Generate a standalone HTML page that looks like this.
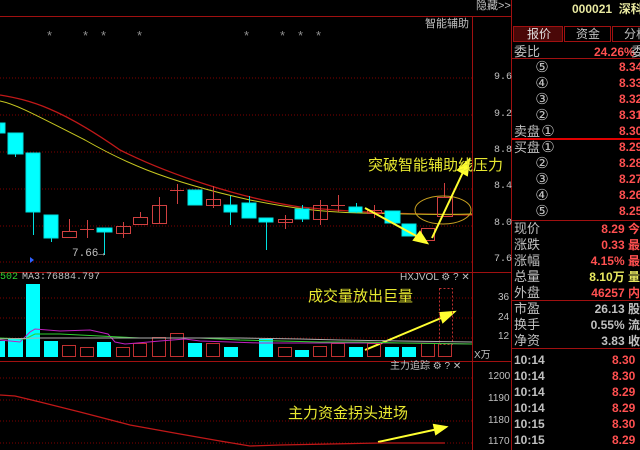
<!DOCTYPE html>
<html><head><meta charset="utf-8"><style>
*{margin:0;padding:0}
body{width:640px;height:450px;background:#000;overflow:hidden;position:relative;font-family:"Liberation Sans","Noto Sans CJK SC",sans-serif}
.t{position:absolute;white-space:nowrap;line-height:1}
.g{color:#c0c0c0}
.r{color:#ff5050}
.c{font-family:"DejaVu Sans",sans-serif;font-size:15px;display:inline-block;width:16px;text-align:center}
.ob div{height:16px}
</style></head><body>
<svg width="640" height="450" style="position:absolute;left:0;top:0" xmlns="http://www.w3.org/2000/svg">
<g stroke="#800000" stroke-width="1" stroke-dasharray="1,2">
<line x1="0" y1="78" x2="472" y2="78"/><line x1="0" y1="115" x2="472" y2="115"/><line x1="0" y1="152" x2="472" y2="152"/>
<line x1="0" y1="189" x2="472" y2="189"/><line x1="0" y1="226" x2="472" y2="226"/><line x1="0" y1="262" x2="472" y2="262"/>
<line x1="0" y1="298" x2="472" y2="298"/><line x1="0" y1="318" x2="472" y2="318"/><line x1="0" y1="338" x2="472" y2="338"/>
<line x1="0" y1="378" x2="472" y2="378"/><line x1="0" y1="400" x2="472" y2="400"/><line x1="0" y1="421" x2="472" y2="421"/><line x1="0" y1="443" x2="472" y2="443"/>
</g>
<g stroke="#a01010" stroke-width="1">
<line x1="0" y1="16.5" x2="511" y2="16.5"/>
<line x1="472.5" y1="16" x2="472.5" y2="450"/>
<line x1="0" y1="272.5" x2="511" y2="272.5"/>
<line x1="0" y1="361.5" x2="511" y2="361.5"/>
<line x1="511.5" y1="0" x2="511.5" y2="450"/>
<line x1="512" y1="58.5" x2="640" y2="58.5"/>
<line x1="512" y1="220.5" x2="640" y2="220.5"/>
<line x1="512" y1="300.5" x2="640" y2="300.5"/>
<line x1="512" y1="348.5" x2="640" y2="348.5"/>
</g>
<line x1="512" y1="139" x2="640" y2="139" stroke="#e00000" stroke-width="2"/>
<rect x="513.5" y="26.5" width="49" height="15" fill="#4a0808" stroke="#a01010"/>
<rect x="564.5" y="26.5" width="46" height="15" fill="#000" stroke="#a01010"/>
<rect x="612.5" y="26.5" width="40" height="15" fill="#000" stroke="#a01010"/>
<path d="M0,95 C30,100 60,108 120,150 C170,175 240,198 300,207 C350,212 400,214 472,215" fill="none" stroke="#c01818" stroke-width="1.3"/>
<path d="M0,101 C15,104 30,112 85,140 C120,160 160,180 250,200 C290,208 320,212 360,213 C400,214 440,215 472,214" fill="none" stroke="#c8c820" stroke-width="1"/>
<g stroke="#00e0e0" fill="#00ffff">
<rect x="0" y="123" width="5" height="10"/>
<line x1="15.5" y1="133" x2="15.5" y2="157"/><rect x="8" y="133" width="15" height="21"/>
<line x1="33.5" y1="153" x2="33.5" y2="235"/><rect x="26" y="153" width="14" height="59"/>
<line x1="51.5" y1="215" x2="51.5" y2="242"/><rect x="44" y="215" width="14" height="23"/>
<line x1="104.5" y1="228" x2="104.5" y2="255"/><rect x="97" y="228" width="15" height="4"/>
<rect x="188" y="190" width="14" height="15"/>
<line x1="230.5" y1="196" x2="230.5" y2="225"/><rect x="224" y="205" width="13" height="7"/>
<line x1="249.5" y1="196" x2="249.5" y2="218"/><rect x="242" y="203" width="14" height="15"/>
<line x1="266.5" y1="218" x2="266.5" y2="250"/><rect x="259" y="218" width="14" height="4"/>
<line x1="302.5" y1="205" x2="302.5" y2="222"/><rect x="295" y="209" width="14" height="10"/>
<line x1="356.5" y1="203" x2="356.5" y2="213"/><rect x="349" y="207" width="13" height="5"/>
<rect x="385" y="211" width="15" height="12"/>
<rect x="402" y="224" width="14" height="12"/>
</g>
<g stroke="#d04040" fill="none">
<line x1="69.5" y1="219" x2="69.5" y2="231"/><rect x="62.5" y="231.5" width="14" height="6"/>
<line x1="80" y1="229.5" x2="94" y2="229.5"/><line x1="87.5" y1="220" x2="87.5" y2="238"/>
<line x1="123.5" y1="222" x2="123.5" y2="238"/><rect x="116.5" y="226.5" width="14" height="7"/>
<line x1="140.5" y1="212" x2="140.5" y2="217"/><rect x="133.5" y="217.5" width="14" height="7"/>
<line x1="159.5" y1="197" x2="159.5" y2="223"/><rect x="152.5" y="205.5" width="14" height="18"/>
<line x1="170" y1="190.5" x2="184" y2="190.5"/><line x1="177.5" y1="184" x2="177.5" y2="204"/>
<line x1="213.5" y1="186" x2="213.5" y2="208"/><rect x="206.5" y="199.5" width="14" height="6"/>
<line x1="285.5" y1="215" x2="285.5" y2="229"/><rect x="278.5" y="219.5" width="14" height="3"/>
<line x1="320.5" y1="200" x2="320.5" y2="225"/><rect x="313.5" y="205.5" width="14" height="14"/>
<line x1="331" y1="205.5" x2="345" y2="205.5"/><line x1="338.5" y1="195" x2="338.5" y2="212"/>
<line x1="374.5" y1="205" x2="374.5" y2="218"/><rect x="367.5" y="210.5" width="14" height="3"/>
<rect x="421.5" y="228.5" width="13" height="12"/>
<line x1="444.5" y1="183" x2="444.5" y2="197"/><rect x="437.5" y="197.5" width="15" height="19"/>
</g>
<path d="M30,257 L34,260 L30,263 Z" fill="#3060ff"/>
<ellipse cx="443" cy="210" rx="28" ry="14" fill="none" stroke="#c8a020" stroke-width="1"/>
<g stroke="#ffff30" stroke-width="2" fill="#ffff30">
<line x1="365" y1="208" x2="420" y2="238"/><path d="M427,243 L414,240 L420,232 Z"/>
<line x1="432" y1="238" x2="465" y2="168"/><path d="M469,160 L467,175 L458,170 Z"/>
<line x1="365" y1="350" x2="446" y2="316"/><path d="M454,312 L443,322 L440,313 Z"/>
<line x1="378" y1="442" x2="438" y2="429"/><path d="M446,427 L436,434 L434,425 Z"/>
</g>
<rect x="439.5" y="288.5" width="13" height="56" fill="none" stroke="#c03030" stroke-dasharray="2,2"/>
<g fill="#00ffff">
<rect x="0" y="341" width="5" height="16"/><rect x="8" y="339" width="15" height="18"/>
<rect x="26" y="284" width="14" height="73"/><rect x="44" y="341" width="14" height="16"/>
<rect x="97" y="342" width="14" height="15"/><rect x="188" y="343" width="14" height="14"/>
<rect x="224" y="347" width="14" height="10"/><rect x="259" y="339" width="14" height="18"/>
<rect x="295" y="350" width="14" height="7"/><rect x="349" y="347" width="14" height="10"/>
<rect x="385" y="347" width="14" height="10"/><rect x="402" y="347" width="14" height="10"/>
</g>
<g fill="none" stroke="#c03030">
<rect x="62.5" y="345.5" width="13" height="11"/><rect x="80.5" y="347.5" width="13" height="9"/>
<rect x="116.5" y="347.5" width="13" height="9"/><rect x="133.5" y="343.5" width="13" height="13"/>
<rect x="152.5" y="337.5" width="13" height="19"/><rect x="170.5" y="333.5" width="13" height="23"/>
<rect x="206.5" y="343.5" width="13" height="13"/><rect x="278.5" y="347.5" width="13" height="9"/>
<rect x="313.5" y="346.5" width="13" height="10"/><rect x="331.5" y="343.5" width="13" height="13"/>
<rect x="367.5" y="343.5" width="13" height="13"/><rect x="421.5" y="343.5" width="13" height="13"/><rect x="438.5" y="343.5" width="13" height="13"/>
</g>
<path d="M0,340 L20,342 L30,332 L35,329 L60,331 L90,330 L108,334 L115,342 L125,344 L160,341 L185,339 L200,341 L230,342 L260,343 L300,343 L340,343 L380,343 L420,343 L472,344" fill="none" stroke="#c020c0" stroke-width="1"/>
<path d="M0,338 L25,339 L35,334 L60,334 L100,336 L140,338 L200,338 L240,340 L280,341 L320,342 L360,342 L400,343 L472,344" fill="none" stroke="#30d030" stroke-width="1"/>
<path d="M0,339 L40,338 L100,338 L160,338 L240,338 L300,339 L340,340 L400,341 L472,342" fill="none" stroke="#b0b0b0" stroke-width="1"/>
<path d="M0,395 L15,396 L40,402 L80,412 L130,425 L180,434 L220,441 L250,446 L280,445 L330,444 L380,443 L445,443" fill="none" stroke="#c01818" stroke-width="1.3"/>
<g fill="#909090">
<text x="47" y="40" font-size="13">*</text><text x="83" y="40" font-size="13">*</text><text x="101" y="40" font-size="13">*</text><text x="137" y="40" font-size="13">*</text>
<text x="244" y="40" font-size="13">*</text><text x="280" y="40" font-size="13">*</text><text x="298" y="40" font-size="13">*</text><text x="316" y="40" font-size="13">*</text>
</g>
</svg>
<div class="t g" style="left:476px;top:1px;font-size:11px">隐藏&gt;&gt;</div>
<div class="t g" style="left:425px;top:19px;font-size:11px">智能辅助</div>
<div class="t g" style="left:494px;top:73px;font-size:10px;font-family:'Liberation Mono',monospace">9.6</div>
<div class="t g" style="left:494px;top:110px;font-size:10px;font-family:'Liberation Mono',monospace">9.2</div>
<div class="t g" style="left:494px;top:146px;font-size:10px;font-family:'Liberation Mono',monospace">8.8</div>
<div class="t g" style="left:494px;top:182px;font-size:10px;font-family:'Liberation Mono',monospace">8.4</div>
<div class="t g" style="left:494px;top:219px;font-size:10px;font-family:'Liberation Mono',monospace">8.0</div>
<div class="t g" style="left:494px;top:255px;font-size:10px;font-family:'Liberation Mono',monospace">7.6</div>
<div class="t g" style="left:72px;top:249px;font-size:11px;font-family:'Liberation Mono',monospace">7.66→</div>
<div class="t" style="left:368px;top:158px;font-size:15px;color:#e8e830">突破智能辅助线压力</div>
<div class="t" style="left:0;top:273px;font-size:10px;color:#30d030;font-family:'Liberation Mono',monospace">502</div>
<div class="t g" style="left:22px;top:273px;font-size:10px;font-family:'Liberation Mono',monospace">MA3:76884.797</div>
<div class="t g" style="left:400px;top:273px;font-size:10px">HXJVOL ⚙ ? ✕</div>
<div class="t" style="left:308px;top:289px;font-size:15px;color:#e8e830">成交量放出巨量</div>
<div class="t g" style="left:498px;top:293px;font-size:10px">36</div>
<div class="t g" style="left:498px;top:313px;font-size:10px">24</div>
<div class="t g" style="left:498px;top:332px;font-size:10px">12</div>
<div class="t g" style="left:474px;top:351px;font-size:10px">X万</div>
<div class="t g" style="left:390px;top:362px;font-size:10px">主力追踪 ⚙ ? ✕</div>
<div class="t g" style="left:488px;top:372px;font-size:10px">1200</div>
<div class="t g" style="left:488px;top:394px;font-size:10px">1190</div>
<div class="t g" style="left:488px;top:416px;font-size:10px">1180</div>
<div class="t g" style="left:488px;top:437px;font-size:10px">1170</div>
<div class="t" style="left:288px;top:406px;font-size:15px;color:#e8e830">主力资金拐头进场</div>
<div class="t" style="left:572px;top:3px;font-size:12px;font-weight:bold;color:#e8e8a0">000021&nbsp;&nbsp;深科</div>
<div class="t" style="left:527px;top:28px;font-size:12px;color:#e0e0e0">报价</div>
<div class="t" style="left:576px;top:28px;font-size:12px;color:#c0c0c0">资金</div>
<div class="t" style="left:624px;top:28px;font-size:12px;color:#c0c0c0">分析</div>
<div style="position:absolute;left:514px;top:44px;width:126px;font-size:13px;color:#c0c0c0;line-height:16px">
<div style="position:absolute;top:0">委比</div><div class="r" style="position:absolute;left:80px;top:0;font-weight:bold;font-size:12px">24.26%</div><div style="position:absolute;left:117px;top:0">委</div>
</div>
<div class="ob" style="position:absolute;left:514px;top:59px;width:126px;font-size:13px;color:#c0c0c0;line-height:16px">
<div style="padding-left:20px"><span class="c">⑤</span></div><div style="padding-left:20px"><span class="c">④</span></div><div style="padding-left:20px"><span class="c">③</span></div><div style="padding-left:20px"><span class="c">②</span></div><div>卖盘<span class="c">①</span></div>
<div>买盘<span class="c">①</span></div><div style="padding-left:20px"><span class="c">②</span></div><div style="padding-left:20px"><span class="c">③</span></div><div style="padding-left:20px"><span class="c">④</span></div><div style="padding-left:20px"><span class="c">⑤</span></div>
</div>
<div class="r" style="position:absolute;left:619px;top:59px;font-size:12px;line-height:16px;font-weight:bold">
<div>8.34</div><div>8.33</div><div>8.32</div><div>8.31</div><div>8.30</div><div>8.29</div><div>8.28</div><div>8.27</div><div>8.26</div><div>8.25</div>
</div>
<div style="position:absolute;left:514px;top:221px;font-size:13px;color:#c0c0c0;line-height:16px">
<div>现价</div><div>涨跌</div><div>涨幅</div><div>总量</div><div>外盘</div>
</div>
<div style="position:absolute;left:560px;top:221px;width:80px;font-size:12px;line-height:16px;text-align:right;font-weight:bold">
<div class="r">8.29 今</div><div class="r">0.33 最</div><div class="r">4.15% 最</div><div style="color:#e8e860">8.10万 量</div><div class="r">46257 内</div>
</div>
<div style="position:absolute;left:514px;top:301px;font-size:13px;color:#c0c0c0;line-height:16px">
<div>市盈</div><div>换手</div><div>净资</div>
</div>
<div style="position:absolute;left:560px;top:301px;width:80px;font-size:12px;line-height:16px;text-align:right;color:#c0c0c0;font-weight:bold">
<div>26.13 股</div><div>0.55% 流</div><div>3.83 收</div>
</div>
<div style="position:absolute;left:514px;top:352px;font-size:12px;color:#c0c0c0;line-height:16px;font-weight:bold">
<div>10:14</div><div>10:14</div><div>10:14</div><div>10:14</div><div>10:15</div><div>10:15</div>
</div>
<div class="r" style="position:absolute;left:612px;top:352px;font-size:12px;line-height:16px;font-weight:bold">
<div>8.30</div><div>8.30</div><div>8.29</div><div>8.29</div><div>8.30</div><div>8.29</div>
</div>
</body></html>
